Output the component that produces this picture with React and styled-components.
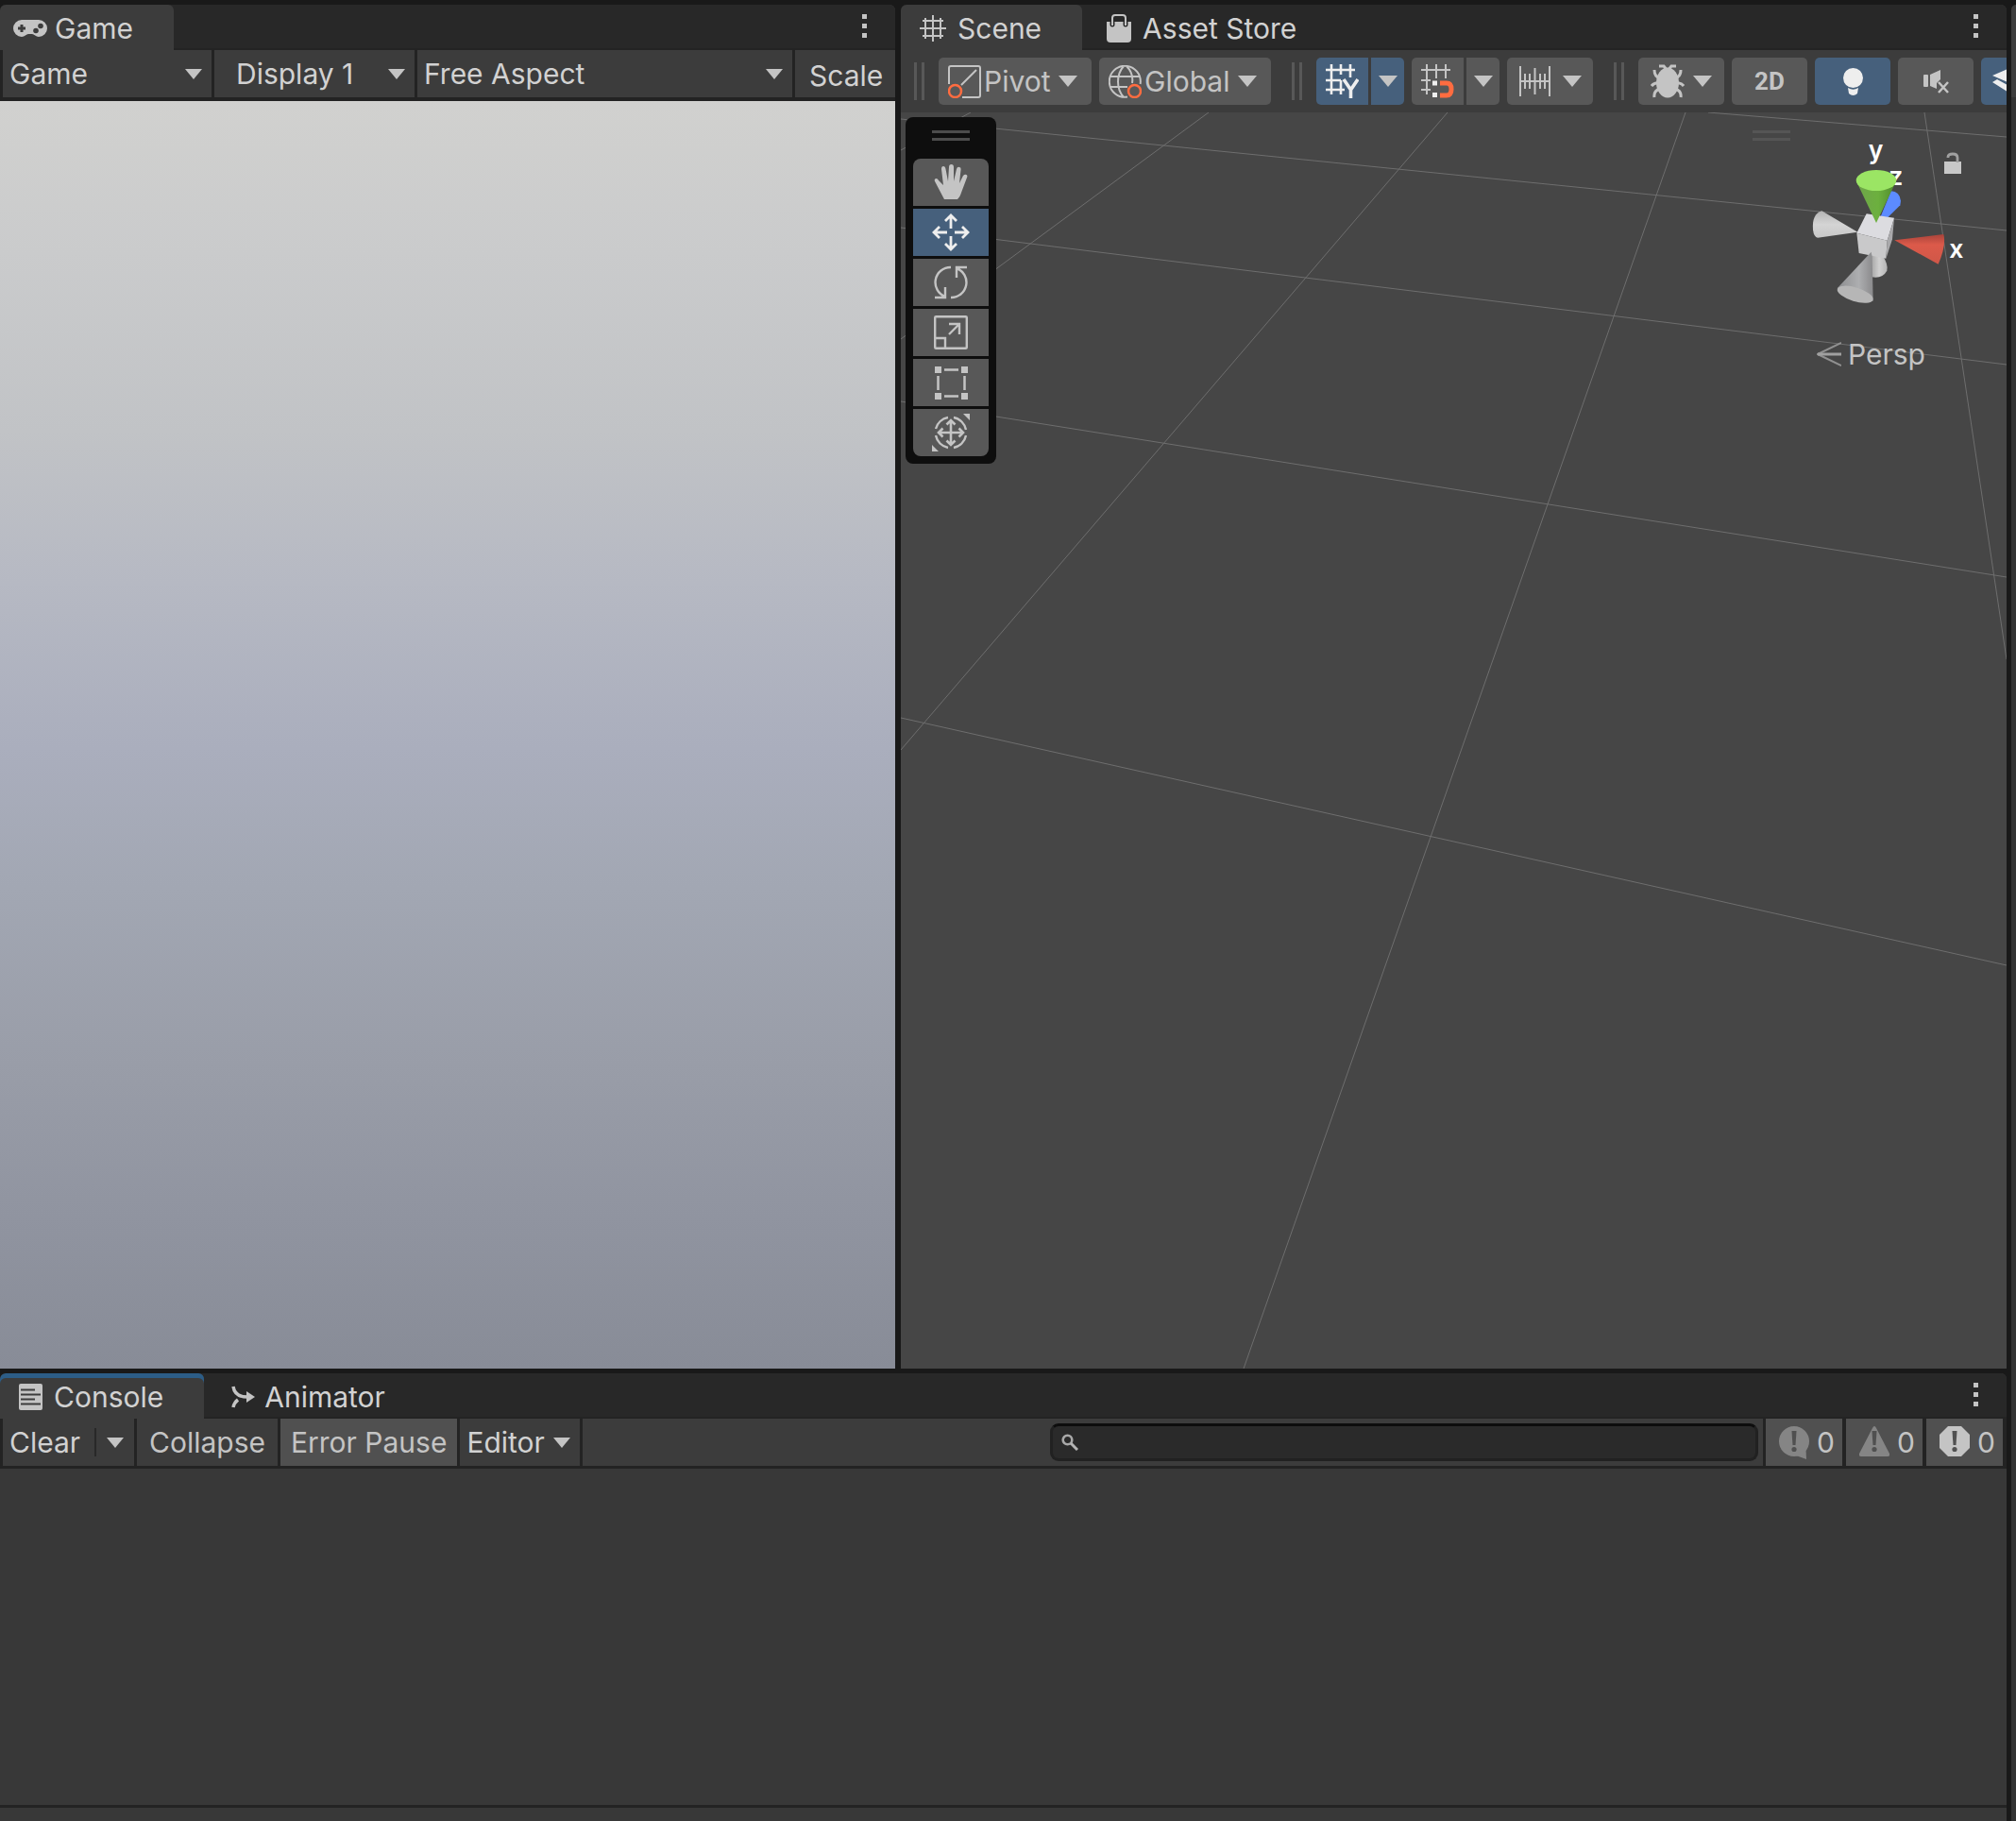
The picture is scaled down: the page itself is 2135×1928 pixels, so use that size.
import React from "react";
import styled, { createGlobalStyle, css } from "styled-components";

const GlobalStyle = createGlobalStyle`
  * { box-sizing: border-box; }
  body {
    margin: 0;
    background: #191919;
    color: #d2d2d2;
    font-family: Inter, "Liberation Sans", sans-serif;
    font-size: 30px;
    line-height: 36px;
  }
  button, select, input { font: inherit; color: inherit; margin: 0; }
  svg { display: block; flex: none; }
`;

/* ---------- window frame ---------- */

const Editor = styled.div`
  display: grid;
  grid-template-columns: minmax(0, 1fr) 5px;
  column-gap: 5px;
  min-height: 100vh;
  padding-top: 5px;
`;

const Workspace = styled.main`
  display: grid;
  grid-template-rows: minmax(0, 1fr) 474px;
  row-gap: 5px;
  min-width: 0;
`;

const TopRow = styled.div`
  display: grid;
  grid-template-columns: minmax(0, 948fr) minmax(0, 1171fr);
  column-gap: 6px;
`;

const Panel = styled.section`
  display: flex;
  flex-direction: column;
  min-width: 0;
  background: #383838;
  border-radius: 6px 6px 0 0;
  overflow: hidden;
`;

const Neighbour = styled.aside`
  display: flex;
  flex-direction: column;
  border-radius: 6px 0 0 0;
  background: #323232;
  border-top: 98px solid #3c3c3c;
`;

/* ---------- tab strip ---------- */

const TabStrip = styled.div`
  display: flex;
  height: 48px;
  background: #282828;
  border-bottom: 2px solid #232323;
`;

const Tab = styled.button`
  display: flex;
  align-items: center;
  height: 48px;
  gap: ${(p) => p.$gap}px;
  padding: 2px 43px 0 ${(p) => p.$inset}px;
  border: 0;
  background: transparent;
  ${(p) =>
    p.$active &&
    css`
      background: #3c3c3c;
      border-radius: 6px 6px 0 0;
    `}
  ${(p) =>
    p.$focused &&
    css`
      box-shadow: inset 0 5px 0 #2c5d87;
    `}
`;

const Kebab = styled.button`
  display: flex;
  flex-direction: column;
  gap: 5px;
  margin: 10px 30px 0 auto;
  padding: 0;
  width: 5px;
  height: 25px;
  border: 0;
  background: transparent;
`;

const Dot = styled.span`
  width: 5px;
  height: 5px;
  background: #c4c4c4;
`;

const MoreMenu = () => (
  <Kebab aria-label="Panel options">
    <Dot />
    <Dot />
    <Dot />
  </Kebab>
);

/* ---------- shared controls ---------- */

const Arrow = ({ small }) =>
  small ? (
    <svg width="18" height="11" viewBox="0 0 18 11" aria-hidden="true">
      <path d="M0 0H18L9 11Z" fill="#c4c4c4" />
    </svg>
  ) : (
    <svg width="20" height="12" viewBox="0 0 20 12" aria-hidden="true">
      <path d="M0 0H20L10 12Z" fill="#c4c4c4" />
    </svg>
  );

const Bar = styled.div`
  display: flex;
  gap: 3px;
  height: ${(p) => p.$height}px;
  padding-left: 3px;
  background: #232323;
  border-bottom: ${(p) => p.$rule}px solid #232323;
`;

const Picker = styled.div`
  display: grid;
  align-items: center;
  flex: ${(p) => p.$flex || "none"};
  height: 50px;
  min-width: 0;
  background: ${(p) => (p.$raised ? "#585858" : "#3c3c3c")};
  border-radius: ${(p) => (p.$raised ? 5 : 0)}px;
  > * { grid-area: 1 / 1; }
  > svg { pointer-events: none; }
  > svg:last-child { justify-self: end; margin-right: ${(p) => (p.$raised ? 15 : 10)}px; }
  > svg:first-child { margin-left: 10px; }
`;

const Choice = styled.select`
  appearance: none;
  width: 100%;
  height: 50px;
  border: 0;
  background: transparent;
  padding: 0 ${(p) => p.$right || 37}px 0 ${(p) => p.$left || 7}px;
  color: ${(p) => p.$color || "#d2d2d2"};
`;

const Flat = styled.button`
  display: flex;
  align-items: center;
  justify-content: center;
  height: 50px;
  padding: 0 ${(p) => (p.$pad === undefined ? 13 : p.$pad)}px;
  gap: 8px;
  width: ${(p) => (p.$width ? p.$width + "px" : "auto")};
  border: 0;
  background: ${(p) => (p.$on ? "#505050" : "#3c3c3c")};
  color: ${(p) => p.$color || "#c4c4c4"};
`;

/* ---------- game panel ---------- */

const ScaleLabel = styled.span`
  display: flex;
  align-items: center;
  width: 106px;
  padding: 4px 0 0 15px;
  background: #3c3c3c;
`;

const GameView = styled.div`
  flex: 1;
  background: linear-gradient(
    180deg,
    #d1d1cf 0%,
    #cacbcc 12%,
    #c1c3c6 26%,
    #b6b9c3 38%,
    #aaaebd 51%,
    #a2a7b3 62%,
    #999da8 76%,
    #9094a0 88%,
    #888c97 100%
  );
`;

/* ---------- scene panel ---------- */

const SceneBar = styled.div`
  display: flex;
  align-items: center;
  gap: 8px;
  height: 66px;
  padding-left: 14px;
  background: #3c3c3c;
  overflow: hidden;
`;

const Grip = styled.span`
  flex: none;
  width: 11px;
  height: 40px;
  margin: 0 7px 0 ${(p) => (p.$first ? 0 : 14)}px;
  border: solid #585858;
  border-width: 0 3px;
`;

const Split = styled.div`
  display: flex;
  flex: none;
  gap: 3px;
  border-radius: 5px;
  overflow: hidden;
`;

const Tool = styled.button`
  display: flex;
  align-items: center;
  justify-content: center;
  flex: none;
  gap: ${(p) => p.$gap || 0}px;
  width: ${(p) => p.$width}px;
  height: 50px;
  padding: 0;
  border: 0;
  border-radius: ${(p) => (p.$square ? 0 : 5)}px;
  background: ${(p) => (p.$on ? "#46607c" : "#585858")};
  color: #c4c4c4;
`;

const TwoD = styled.span`
  font: 700 26px/32px Roboto, sans-serif;
`;

const SceneView = styled.div`
  position: relative;
  flex: 1;
  background: #464646;
  overflow: hidden;
`;

const GridLines = styled.svg`
  position: absolute;
  inset: 0;
  width: 100%;
  height: 100%;
`;

const ToolOverlay = styled.div`
  position: absolute;
  top: 5px;
  left: 5px;
  display: flex;
  flex-direction: column;
  align-items: center;
  gap: 3px;
  padding: 14px 8px 8px;
  border-radius: 8px;
  background: #0e0e0e;
  > button:first-of-type { border-radius: 8px 8px 0 0; }
  > button:last-of-type { border-radius: 0 0 8px 8px; }
`;

const DragBars = styled.span`
  width: 40px;
  height: 11px;
  border: solid ${(p) => p.$color};
  border-width: 3px 0;
  margin-bottom: ${(p) => p.$below || 0}px;
`;

const GizmoOverlay = styled.div`
  position: absolute;
  top: 0;
  right: 0;
  width: 285px;
  height: 291px;
`;

const GizmoGrip = styled.div`
  position: absolute;
  top: 19px;
  left: 16px;
  display: flex;
`;

const LockButton = styled.button`
  position: absolute;
  top: 42px;
  right: 48px;
  padding: 0;
  border: 0;
  background: transparent;
`;

const Projection = styled.button`
  position: absolute;
  top: 238px;
  left: 84px;
  display: flex;
  align-items: center;
  gap: 7px;
  padding: 0;
  border: 0;
  background: transparent;
  color: #c4c4c4;
`;

/* ---------- console ---------- */

const ClearGroup = styled.div`
  display: flex;
  align-items: center;
  width: 139px;
  background: #3c3c3c;
`;

const Separator = styled.span`
  width: 2px;
  height: 30px;
  margin-left: auto;
  background: #282828;
`;

const SearchArea = styled.div`
  flex: 1;
  display: flex;
  justify-content: flex-end;
  align-items: center;
  padding-right: 5px;
  background: #3c3c3c;
`;

const SearchBox = styled.label`
  display: flex;
  align-items: center;
  flex: 0 1 750px;
  height: 40px;
  padding-left: 9px;
  border: 3px solid #212121;
  border-top-color: #0d0d0d;
  border-radius: 9px;
  background: #2a2a2a;
  input {
    flex: 1;
    min-width: 0;
    padding: 0 8px;
    border: 0;
    outline: 0;
    background: transparent;
  }
`;

const Counters = styled.div`
  display: flex;
  gap: 4px;
  padding-right: 4px;
`;

const Counter = styled(Flat)`
  justify-content: flex-start;
  width: 81px;
  padding: 0 0 0 14px;
`;

const LogArea = styled.div`
  flex: 1;
  background: #383838;
  border-bottom: 3px solid #232323;
`;

const LogDetail = styled.div`
  height: 14px;
  background: #383838;
`;

/* ---------- icons ---------- */

const GamepadIcon = () => (
  <svg width="36" height="18" viewBox="0 0 36 18" aria-hidden="true">
    <path
      d="M9 0H27A9 9 0 0 1 27 18C24 18 22 15 20 15H16C14 15 12 18 9 18A9 9 0 0 1 9 0Z"
      fill="#c4c4c4"
    />
    <path d="M9 5V13M5 9H13" stroke="#3c3c3c" strokeWidth="3" />
    <circle cx="29" cy="6.5" r="2.8" fill="#3c3c3c" />
    <circle cx="24" cy="11.5" r="2.8" fill="#3c3c3c" />
  </svg>
);

const SceneIcon = () => (
  <svg width="28" height="28" viewBox="0 0 28 28" aria-hidden="true">
    <path
      d="M6 3V25M14 0V28M22 3V25M3 6H25M0 14H28M3 22H25"
      stroke="#c4c4c4"
      strokeWidth="2"
      fill="none"
    />
  </svg>
);

const StoreIcon = () => (
  <svg width="26" height="30" viewBox="0 0 26 30" aria-hidden="true">
    <path d="M0 8H26V26Q26 30 22 30H4Q0 30 0 26Z" fill="#c4c4c4" />
    <path d="M6 9V11M20 9V11" stroke="#282828" strokeWidth="5" strokeLinecap="round" />
    <path
      d="M6 12V4Q6 1 9 1H17Q20 1 20 4V12"
      stroke="#c4c4c4"
      strokeWidth="2"
      fill="none"
    />
  </svg>
);

const PivotIcon = () => (
  <svg width="35" height="35" viewBox="0 0 35 35" fill="none" aria-hidden="true">
    <path d="M1 20V3Q1 1 3 1H32Q34 1 34 3V32Q34 34 32 34H15M14 21L30 5" stroke="#c4c4c4" strokeWidth="2" />
    <circle cx="7.500" cy="27.500" r="6.500" stroke="#ff6c40" strokeWidth="2.500" />
  </svg>
);

const GlobeIcon = () => (
  <svg width="35" height="35" viewBox="0 0 35 35" fill="none" aria-hidden="true">
    <path
      d="M20 33.600A16.500 16.500 0 1 1 33.600 20M2 12H33M2 23H20M16 1C8 10 8 25 16 34M19 1C24 6 26 13 25 19"
      stroke="#c4c4c4"
      strokeWidth="2"
    />
    <circle cx="27.500" cy="27.500" r="6.500" stroke="#ff6c40" strokeWidth="2.500" />
  </svg>
);

const GridYIcon = () => (
  <svg width="35" height="36" viewBox="0 0 35 36" fill="none" aria-hidden="true">
    <path
      d="M6 0V32M16 0V11M16 17V32M26 0V14M0 6H31M0 17H16M0 27H20"
      stroke="#eeeeee"
      strokeWidth="2.600"
    />
    <path d="M19 16L26.500 27L34 16M26.500 26V36" stroke="#eeeeee" strokeWidth="3.600" />
  </svg>
);

const SnapIcon = () => (
  <svg width="35" height="36" viewBox="0 0 35 36" fill="none" aria-hidden="true">
    <path
      d="M6 0V32M16 0V15M26 0V15M0 6H31M0 17H10M0 27H10"
      stroke="#c4c4c4"
      strokeWidth="2"
    />
    <path d="M12 17.500H17V22.500H12ZM12 30H17V35H12Z" fill="#eeeeee" />
    <path d="M20 20H27Q32 20 32 26.500T27 33H20" stroke="#ff6c40" strokeWidth="5" />
  </svg>
);

const IncrementIcon = () => (
  <svg width="33" height="32" viewBox="0 0 33 32" fill="none" aria-hidden="true">
    <path
      d="M1 0V32M6 8V24M11 8V24M16.500 2V30M22 8V24M27 8V24M32 0V32M1 16H32"
      stroke="#c4c4c4"
      strokeWidth="2"
    />
  </svg>
);

const BugIcon = () => (
  <svg width="36" height="36" viewBox="0 0 36 36" fill="none" aria-hidden="true">
    <path
      d="M9 2H14L18 7L22 2H27M4 6Q4 13 10 15M32 6Q32 13 26 15M1 23Q4 19 10 20M35 23Q32 19 26 20M4 35Q3 28 10 26M32 35Q33 28 26 26"
      stroke="#c4c4c4"
      strokeWidth="3"
    />
    <ellipse cx="18" cy="19.500" rx="12" ry="16" fill="#c4c4c4" />
  </svg>
);

const BulbIcon = () => (
  <svg width="21" height="29" viewBox="0 0 21 29" aria-hidden="true">
    <circle cx="10.500" cy="10.500" r="10.500" fill="#eeeeee" />
    <path d="M5 21Q10.500 24.500 16 21L15 27Q10.500 31 6 27Z" fill="#eeeeee" />
  </svg>
);

const MuteIcon = () => (
  <svg width="27" height="25" viewBox="0 0 27 25" aria-hidden="true">
    <rect x="0" y="5" width="5" height="13" rx="1" fill="#c4c4c4" />
    <path d="M7 5L18 0V10L14 14V20L7 17Z" fill="#c4c4c4" />
    <path d="M16 13L26 24M26 13L16 24" stroke="#c4c4c4" strokeWidth="2.500" />
  </svg>
);

const LayersIcon = () => (
  <svg width="32" height="26" viewBox="0 0 32 26" fill="#eeeeee" aria-hidden="true">
    <path d="M16 0L32 7L16 14L0 7Z" />
    <path d="M0 14L5 11L16 17L27 11L32 14L16 24Z" />
  </svg>
);

const HandIcon = () => (
  <svg width="36" height="38" viewBox="0 0 36 38" aria-hidden="true">
    <path
      d="M11 37L1 18Q0 15 2.500 15Q4 15 5 17L10 22L8 5Q8 2 10 2Q12 2 12.500 5L15 18L16 3Q16 0 18.500 0Q21 0 21 3V18L24 5Q25 2 27 3Q29 3 28.500 6L27 20L31 12Q33 10 34.500 11Q36 12 35 14L29 30Q28 34 25 37Z"
      fill="#c4c4c4"
    />
  </svg>
);

const MoveIcon = () => (
  <svg width="40" height="40" viewBox="0 0 40 40" fill="none" aria-hidden="true">
    <path
      d="M20 16V2M14 8L20 2L26 8M20 24V38M14 32L20 38L26 32M16 20H2M8 14L2 20L8 26M24 20H38M32 14L38 20L32 26"
      stroke="#eeeeee"
      strokeWidth="2.800"
    />
  </svg>
);

const RotateIcon = () => (
  <svg width="36" height="36" viewBox="0 0 36 36" fill="none" aria-hidden="true">
    <path
      d="M18 2A16 16 0 0 0 12 33M1 34H12V23M18 34A16 16 0 0 0 24 3M35 2H24V13"
      stroke="#c4c4c4"
      strokeWidth="2.400"
    />
  </svg>
);

const ScaleIcon = () => (
  <svg width="36" height="36" viewBox="0 0 36 36" fill="none" aria-hidden="true">
    <rect x="1.200" y="1.200" width="33.600" height="33.600" rx="1" stroke="#c4c4c4" strokeWidth="2.400" />
    <path d="M1 24H12V35M16 20L27 9M16 9H27V20" stroke="#c4c4c4" strokeWidth="2.400" />
  </svg>
);

const RectIcon = () => (
  <svg width="36" height="36" viewBox="-1 -1 36 36" fill="none" aria-hidden="true">
    <path
      d="M0 0H7V7H0ZM28 0H35V7H28ZM0 28H7V35H0ZM28 28H35V35H28Z"
      fill="#c4c4c4"
    />
    <path d="M10 3.500H25M10 31.500H25M3.500 10V25M31.500 10V25" stroke="#c4c4c4" strokeWidth="2.500" />
  </svg>
);

const TransformIcon = () => (
  <svg width="40" height="40" viewBox="0 0 40 40" fill="none" aria-hidden="true">
    <path
      d="M4 16A16.500 16.500 0 0 1 17 4M23 4A16.500 16.500 0 0 1 36 17M36 23A16.500 16.500 0 0 1 23 36M17 36A16.500 16.500 0 0 1 4 23"
      stroke="#c4c4c4"
      strokeWidth="2.400"
    />
    <path
      d="M20 7V33M15.500 11.500L20 7L24.500 11.500M15.500 28.500L20 33L24.500 28.500M7 20H33M11.500 15.500L7 20L11.500 24.500M28.500 15.500L33 20L28.500 24.500"
      stroke="#c4c4c4"
      strokeWidth="2.600"
    />
    <path d="M33 0H40V7ZM0 33V40H7Z" fill="#c4c4c4" />
  </svg>
);

const LockIcon = () => (
  <svg width="18" height="24" viewBox="0 0 18 24" fill="none" aria-hidden="true">
    <rect x="0" y="10" width="18" height="13" fill="#c8c8c8" />
    <path d="M4 6V5Q4 2 9 2Q14 2 14 6V11" stroke="#a0a0a0" strokeWidth="2.800" />
  </svg>
);

const PerspIcon = () => (
  <svg width="26" height="26" viewBox="0 0 26 26" fill="none" aria-hidden="true">
    <path d="M26 1L1 13L26 25" stroke="#909090" strokeWidth="2" />
    <path d="M1 13H26" stroke="#a0a0a0" strokeWidth="3" />
  </svg>
);

const ConsoleIcon = () => (
  <svg width="25" height="28" viewBox="0 0 25 28" aria-hidden="true">
    <rect width="25" height="28" rx="2" fill="#c4c4c4" />
    <path d="M2 6.500H17M2 11.500H23M2 16.500H17M2 21.500H23" stroke="#3c3c3c" strokeWidth="2.200" />
  </svg>
);

const AnimatorIcon = () => (
  <svg width="25" height="24" viewBox="0 0 25 24" fill="none" aria-hidden="true">
    <path d="M2 1C3 8 8 12 17 12M2 23Q3 18 7 15" stroke="#c4c4c4" strokeWidth="3.500" />
    <path d="M16 6L25 12L16 18Z" fill="#c4c4c4" />
  </svg>
);

const SearchIcon = () => (
  <svg width="18" height="18" viewBox="0 0 18 18" fill="none" aria-hidden="true">
    <circle cx="6.500" cy="6.500" r="4.800" stroke="#a8a8a8" strokeWidth="2.600" />
    <path d="M10 10L17 17" stroke="#b4b4b4" strokeWidth="3" />
  </svg>
);

const Mark = () => (
  <>
    <path d="M13.500 5H18.500L17.500 20H14.500Z" fill="#505050" />
    <circle cx="16" cy="24.500" r="2.600" fill="#505050" />
  </>
);

const countShapes = {
  info: (
    <>
      <circle cx="16" cy="16" r="16" fill="#858585" />
      <path d="M18 31L29 35L28.500 24Z" fill="#858585" />
    </>
  ),
  warning: <path d="M16 0Q17 0 18 2L32 29Q33 32 30 32H2Q-1 32 0 29L14 2Q15 0 16 0Z" fill="#858585" />,
  error: <path d="M9 0H23L32 9V23L23 32H9L0 23V9Z" fill="#c4c4c4" />,
};

const CountIcon = ({ kind }) => (
  <svg width="32" height="38" viewBox="0 -2 32 38" aria-hidden="true">
    {countShapes[kind]}
    <Mark />
  </svg>
);

const overlayTools = [
  { name: "View", Icon: HandIcon },
  { name: "Move", Icon: MoveIcon, on: true },
  { name: "Rotate", Icon: RotateIcon },
  { name: "Scale", Icon: ScaleIcon },
  { name: "Rect", Icon: RectIcon },
  { name: "Transform", Icon: TransformIcon },
];

const groundLines = [
  [954, 760, 2125, 1022],
  [954, 425, 2125, 611],
  [954, 241, 2125, 386],
  [954, 126, 2125, 244],
  [1809, 119, 2125, 145],
  [1785, 119, 1317, 1449],
  [1533, 119, 954, 794],
  [1280, 119, 954, 359],
  [1028, 119, 954, 159],
  [2038, 119, 2125, 698],
];

/* ---------- scene orientation drawing ---------- */

const Gizmo = () => (
  <svg width="285" height="291" viewBox="0 27 855 873" role="img" aria-label="Scene orientation">
    <defs>
      <linearGradient id="up" x1="0" x2="1">
        <stop offset="0" stopColor="#6fa54b" />
        <stop offset="0.550" stopColor="#6cb03e" />
        <stop offset="1" stopColor="#4f8a2c" />
      </linearGradient>
      <linearGradient id="left" x1="0" y1="0" x2="0" y2="1">
        <stop offset="0" stopColor="#b4b4b4" />
        <stop offset="0.500" stopColor="#d4d4d4" />
        <stop offset="1" stopColor="#c8c8c8" />
      </linearGradient>
      <linearGradient id="front" x1="0" x2="1">
        <stop offset="0" stopColor="#8c8d8f" />
        <stop offset="0.600" stopColor="#adaeb0" />
        <stop offset="1" stopColor="#8a8a8c" />
      </linearGradient>
      <linearGradient id="right" x1="0" y1="0" x2="0" y2="1">
        <stop offset="0" stopColor="#a8433a" />
        <stop offset="0.350" stopColor="#dc5a4a" />
        <stop offset="1" stopColor="#cf5748" />
      </linearGradient>
      <linearGradient id="down" x1="0" x2="1">
        <stop offset="0" stopColor="#a6a6a6" />
        <stop offset="0.500" stopColor="#d0d0d0" />
        <stop offset="1" stopColor="#b4b4b4" />
      </linearGradient>
    </defs>
    <g fontFamily="Inter, sans-serif" fontWeight="600" fontSize="80" fill="#ffffff">
      <text x="416" y="175">y</text>
      <text x="481" y="258">z</text>
      <text x="673" y="488">x</text>
    </g>
    <path d="M455 358L488 277Q515 278 519 308L517 322L476 362Z" fill="#5c8bff" />
    <path d="M425 470L427 550Q460 556 475 530Q480 510 460 480Z" fill="url(#down)" />
    <path d="M382 407L268 340Q236 350 240 400Q243 425 255 425Z" fill="url(#left)" />
    <path d="M410 349L498 362L476 434L379 410Z" fill="#dcdce0" />
    <path d="M379 410L476 434L472 491L386 474Z" fill="#c9c9ca" />
    <path d="M476 434L498 362L492 430L472 491Z" fill="#a9a9ab" />
    <path d="M425 470L317 586Q370 640 431 626L428 486Z" fill="url(#front)" />
    <ellipse cx="374" cy="605" rx="59" ry="22" transform="rotate(17 374 605)" fill="#b6b6b6" />
    <path d="M379 248L441 378L503 248Z" fill="url(#up)" />
    <ellipse cx="441" cy="243" rx="64" ry="33" fill="#9be564" />
    <path d="M499 433L655 414Q664 450 638 509Z" fill="url(#right)" />
  </svg>
);

export default function App() {
  return (
    <>
      <GlobalStyle />
      <Editor>
        <Workspace>
          <TopRow>
            <Panel aria-label="Game">
              <TabStrip>
                <Tab $active $inset={14} $gap={8}>
                  <GamepadIcon />
                  Game
                </Tab>
                <MoreMenu />
              </TabStrip>
              <Bar $height={54} $rule={4}>
                <Picker $flex="221 1 0">
                  <Choice aria-label="View mode">
                    <option>Game</option>
                  </Choice>
                  <Arrow small />
                </Picker>
                <Picker $flex="212 1 0">
                  <Choice aria-label="Display" $left={23}>
                    <option>Display 1</option>
                  </Choice>
                  <Arrow small />
                </Picker>
                <Picker $flex="397 1 0">
                  <Choice aria-label="Aspect ratio">
                    <option>Free Aspect</option>
                  </Choice>
                  <Arrow small />
                </Picker>
                <ScaleLabel>Scale</ScaleLabel>
              </Bar>
              <GameView />
            </Panel>

            <Panel aria-label="Scene">
              <TabStrip>
                <Tab $active $inset={20} $gap={12}>
                  <SceneIcon />
                  Scene
                </Tab>
                <Tab $inset={26} $gap={12}>
                  <StoreIcon />
                  Asset Store
                </Tab>
                <MoreMenu />
              </TabStrip>
              <SceneBar>
                <Grip $first />
                <Picker $raised>
                  <PivotIcon />
                  <Choice aria-label="Handle position" $left={48} $right={43} $color="#c4c4c4">
                    <option>Pivot</option>
                  </Choice>
                  <Arrow />
                </Picker>
                <Picker $raised>
                  <GlobeIcon />
                  <Choice aria-label="Handle rotation" $left={48} $right={43} $color="#c4c4c4">
                    <option>Global</option>
                  </Choice>
                  <Arrow />
                </Picker>
                <Grip />
                <Split>
                  <Tool $on $square $width={55} aria-label="Grid visibility"><GridYIcon /></Tool>
                  <Tool $on $square $width={35} aria-label="Grid options"><Arrow /></Tool>
                </Split>
                <Split>
                  <Tool $square $width={55} aria-label="Grid snapping"><SnapIcon /></Tool>
                  <Tool $square $width={35} aria-label="Snapping options"><Arrow /></Tool>
                </Split>
                <Tool $width={91} $gap={13} aria-label="Increment snap"><IncrementIcon /><Arrow /></Tool>
                <Grip />
                <Tool $width={91} $gap={9} aria-label="Debug draw mode"><BugIcon /><Arrow /></Tool>
                <Tool $width={80}><TwoD>2D</TwoD></Tool>
                <Tool $on $width={80} aria-label="Lighting"><BulbIcon /></Tool>
                <Tool $width={80} aria-label="Audio"><MuteIcon /></Tool>
                <Tool $on $width={55} aria-label="Effects"><LayersIcon /></Tool>
              </SceneBar>
              <SceneView>
                <GridLines viewBox="954 119 1171 1330" preserveAspectRatio="xMinYMin slice" aria-hidden="true">
                  {groundLines.map(([x1, y1, x2, y2]) => (
                    <line key={x1 + "-" + y1} x1={x1} y1={y1} x2={x2} y2={y2} stroke="#6e6e6e" strokeWidth="1" />
                  ))}
                </GridLines>
                <ToolOverlay>
                  <DragBars $color="#4c4c4c" $below={16} />
                  {overlayTools.map(({ name, Icon, on }) => (
                    <Tool key={name} $square $width={80} $on={on} aria-label={name}>
                      <Icon />
                    </Tool>
                  ))}
                </ToolOverlay>
                <GizmoOverlay>
                  <Gizmo />
                  <GizmoGrip><DragBars $color="#555555" /></GizmoGrip>
                  <LockButton aria-label="Lock rotation"><LockIcon /></LockButton>
                  <Projection>
                    <PerspIcon />
                    Persp
                  </Projection>
                </GizmoOverlay>
              </SceneView>
            </Panel>
          </TopRow>

          <Panel aria-label="Console">
            <TabStrip>
              <Tab $active $focused $inset={20} $gap={12}>
                <ConsoleIcon />
                Console
              </Tab>
              <Tab $inset={29} $gap={10}>
                <AnimatorIcon />
                Animator
              </Tab>
              <MoreMenu />
            </TabStrip>
            <Bar $height={53} $rule={3}>
              <ClearGroup>
                <Flat $pad={7} $color="#d2d2d2">Clear</Flat>
                <Separator />
                <Flat $width={40} $pad={0} aria-label="Clear options"><Arrow small /></Flat>
              </ClearGroup>
              <Flat>Collapse</Flat>
              <Flat $on $pad={11}>Error Pause</Flat>
              <Picker>
                <Choice aria-label="Log source">
                  <option>Editor</option>
                </Choice>
                <Arrow small />
              </Picker>
              <SearchArea>
                <SearchBox>
                  <SearchIcon />
                  <input type="text" aria-label="Search log" />
                </SearchBox>
              </SearchArea>
              <Counters>
                <Counter $on aria-label="0 messages"><CountIcon kind="info" />0</Counter>
                <Counter $on aria-label="0 warnings"><CountIcon kind="warning" />0</Counter>
                <Counter $on aria-label="0 errors"><CountIcon kind="error" />0</Counter>
              </Counters>
            </Bar>
            <LogArea />
            <LogDetail />
          </Panel>
        </Workspace>
        <Neighbour />
      </Editor>
    </>
  );
}
